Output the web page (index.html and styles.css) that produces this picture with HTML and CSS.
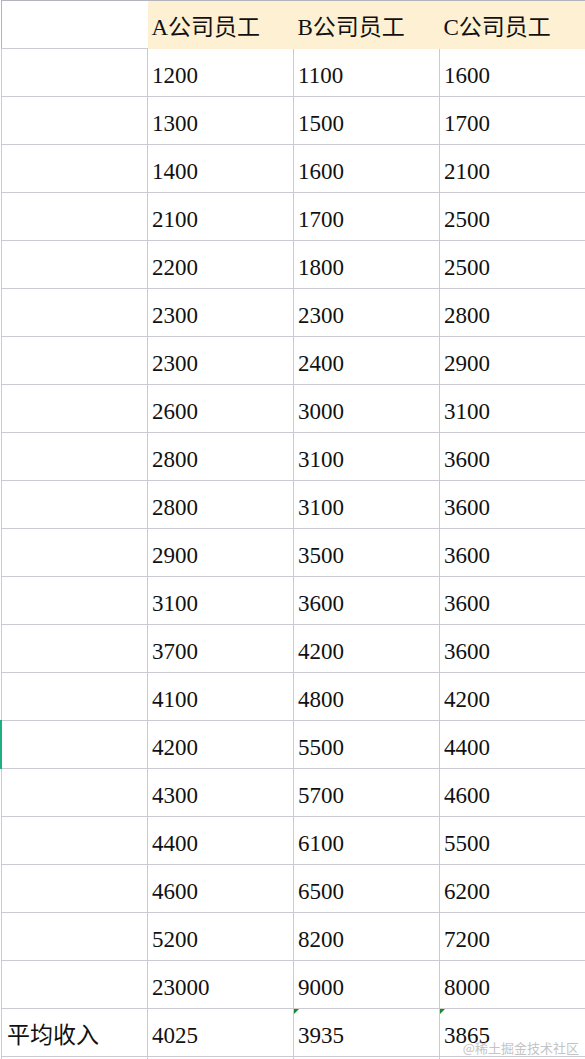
FILE: index.html
```html
<!DOCTYPE html>
<html lang="zh">
<head>
<meta charset="utf-8">
<link rel="stylesheet" href="styles.css">
</head>
<body>
<div class="sheet">
<table class="grid">
<colgroup><col class="c"><col class="c"><col class="c"><col class="c"></colgroup>
<thead>
<tr class="head"><th class="blank"></th><th>A公司员工</th><th>B公司员工</th><th>C公司员工</th></tr>
</thead>
<tbody>
<tr><td></td><td>1200</td><td>1100</td><td>1600</td></tr>
<tr><td></td><td>1300</td><td>1500</td><td>1700</td></tr>
<tr><td></td><td>1400</td><td>1600</td><td>2100</td></tr>
<tr><td></td><td>2100</td><td>1700</td><td>2500</td></tr>
<tr><td></td><td>2200</td><td>1800</td><td>2500</td></tr>
<tr><td></td><td>2300</td><td>2300</td><td>2800</td></tr>
<tr><td></td><td>2300</td><td>2400</td><td>2900</td></tr>
<tr><td></td><td>2600</td><td>3000</td><td>3100</td></tr>
<tr><td></td><td>2800</td><td>3100</td><td>3600</td></tr>
<tr><td></td><td>2800</td><td>3100</td><td>3600</td></tr>
<tr><td></td><td>2900</td><td>3500</td><td>3600</td></tr>
<tr><td></td><td>3100</td><td>3600</td><td>3600</td></tr>
<tr><td></td><td>3700</td><td>4200</td><td>3600</td></tr>
<tr><td></td><td>4100</td><td>4800</td><td>4200</td></tr>
<tr><td class="marked"></td><td>4200</td><td>5500</td><td>4400</td></tr>
<tr><td></td><td>4300</td><td>5700</td><td>4600</td></tr>
<tr><td></td><td>4400</td><td>6100</td><td>5500</td></tr>
<tr><td></td><td>4600</td><td>6500</td><td>6200</td></tr>
<tr><td></td><td>5200</td><td>8200</td><td>7200</td></tr>
<tr><td></td><td>23000</td><td>9000</td><td>8000</td></tr>
<tr><td class="label">平均收入</td><td>4025</td><td class="flag">3935</td><td class="flag">3865</td></tr>
<tr><td></td><td></td><td></td><td></td></tr>
</tbody>
</table>
<div class="watermark">@稀土掘金技术社区</div>
</div>
</body>
</html>
```

FILE: styles.css
```css
html, body {
  margin: 0;
  padding: 0;
  background: #fff;
  overflow: hidden;
}

body {
  width: 585px;
  height: 1059px;
  font-family: "Liberation Serif", "Noto Sans CJK SC", serif;
  color: #111;
}

.sheet {
  position: relative;
  width: 585px;
  height: 1059px;
  overflow: hidden;
}

.grid {
  border-collapse: collapse;
  table-layout: fixed;
  width: 585px;
  margin-left: 1px;
  border-top: 1px solid #b4b4bc;
  border-left: 1px solid #b4b4bc;
}

.c {
  width: 146px;
}

.grid th,
.grid td {
  height: 48px;
  padding: 14px 4px 0;
  box-sizing: border-box;
  vertical-align: top;
  text-align: left;
  font-weight: normal;
  font-size: 23px;
  line-height: 26px;
  white-space: nowrap;
  border: 1px solid #cacad0;
}

.head th {
  background: #fef0d3;
  border-left: none;
  border-right: none;
  border-top: 1px solid #b4b4bc;
  border-bottom: 1px solid #fef0d3;
}

.head th.blank {
  background: #fff;
  border-bottom: 1px solid #cacad0;
}

.grid td.marked {
  position: relative;
}

.grid td.marked::before {
  content: "";
  position: absolute;
  left: -2px;
  top: -1px;
  width: 2px;
  height: 49px;
  background: #1fae82;
}

.grid td.label {
  padding-left: 5px;
}

.grid td.flag {
  position: relative;
}

.grid td.flag::before {
  content: "";
  position: absolute;
  left: 0;
  top: 0;
  width: 0;
  height: 0;
  border-top: 5px solid #1a8a2a;
  border-right: 5px solid transparent;
}

.watermark {
  position: absolute;
  right: 6px;
  top: 1039px;
  font-family: "Noto Sans CJK SC", sans-serif;
  font-size: 13px;
  line-height: 18px;
  color: #c4c4c4;
}
```
